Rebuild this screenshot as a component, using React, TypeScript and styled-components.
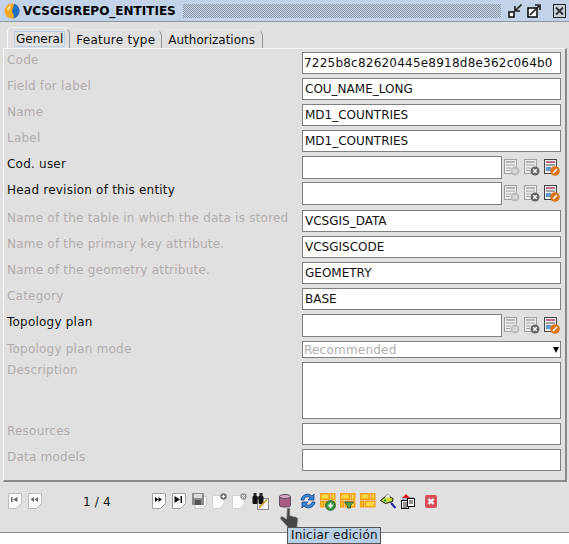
import React from 'react';
import styled, { createGlobalStyle } from 'styled-components';

const GlobalStyle = createGlobalStyle`
  html, body {
    margin: 0;
    padding: 0;
    background: #fff;
  }
  body {
    font-family: "DejaVu Sans", sans-serif;
    font-size: 12px;
  }
`;

const Frame = styled.div`
  position: relative;
  width: 569px;
  height: 544px;
  overflow: hidden;
`;

const Win = styled.div`
  height: 533px;
  background: #e0e0e0;
  border-bottom: 1px solid #8a8a8a;
  box-sizing: border-box;
`;

const TitleBar = styled.div`
  height: 22px;
  background: #c2d2e8;
  border-bottom: 1px solid #8c949e;
  box-sizing: border-box;
  display: flex;
  align-items: center;
  padding: 0 3px 0 4px;
`;

const TitleText = styled.span`
  font-weight: bold;
  font-size: 12px;
  color: #000;
  margin-left: 3px;
`;

const Dots = styled.div`
  flex: 1;
  height: 14px;
  margin: 0 7px 0 7px;
  background-image: conic-gradient(#8e98a6 25%, #c2d2e8 0 50%, #8e98a6 0 75%, #c2d2e8 0);
  background-size: 2px 2px;
`;

const TitleButtons = styled.div`
  display: flex;
  align-items: center;
  gap: 5px;
`;

const CloseSlot = styled.div`
  display: flex;
  margin-left: 12px;
`;

const TabStrip = styled.div`
  display: flex;
  height: 26px;
  padding: 5px 0 0 7px;
  box-sizing: border-box;
`;

const Tab = styled.div<{ $active?: boolean; $ls?: number; $pr?: number }>`
  height: ${p => (p.$active ? 21 : 19)}px;
  margin-top: ${p => (p.$active ? 0 : 2)}px;
  margin-right: 2px;
  padding: ${p => (p.$active ? '3px 4px 0 6px' : `3px ${p.$pr ?? 6}px 0 3px`)};
  box-sizing: border-box;
  border-left: 1px solid ${p => (p.$active ? '#fafafa' : 'transparent')};
  border-top: 1px solid ${p => (p.$active ? '#f0f0f0' : '#e6e6e6')};
  border-right: 1px solid #969696;
  border-radius: 5px 7px 0 0;
  color: #111;
  font-size: 12px;
  line-height: 14px;
  letter-spacing: ${p => p.$ls ?? 0}px;
  white-space: nowrap;
`;

const TabFocus = styled.span`
  display: inline-block;
  border: 1px solid #b8cfe8;
  padding: 0 1px;
  line-height: 14px;
`;

const Sheet = styled.div`
  margin: 0 2px 0 3px;
  height: 434px;
  padding: 3px 4px 0 3px;
  border-top: 1px solid #f6f6f6;
  border-left: 1px solid #f6f6f6;
  border-right: 2px solid #8a8a8a;
  border-bottom: 2px solid #8a8a8a;
  box-sizing: border-box;
  display: flex;
  flex-direction: column;
`;

const Row = styled.div<{ $h?: number; $gap?: number }>`
  display: grid;
  grid-template-columns: 295px 1fr;
  height: ${p => p.$h ?? 22}px;
  margin-bottom: ${p => p.$gap ?? 4}px;
`;

const Label = styled.div<{ $on?: boolean }>`
  color: ${p => (p.$on ? '#111' : '#b2acac')};
  padding-top: 1px;
  line-height: 15px;
  font-size: 12px;
  letter-spacing: 0.22px;
  white-space: nowrap;
`;

const Field = styled.div`
  display: flex;
  align-items: stretch;
  min-width: 0;
`;

const Input = styled.div`
  flex: 1;
  border: 1px solid #808080;
  background: #fff;
  color: #111;
  font-size: 12px;
  line-height: 19px;
  padding: 1px 0 0 2px;
  box-sizing: border-box;
  white-space: nowrap;
  overflow: hidden;
`;

const CodeInput = styled(Input)`
  padding-left: 1px;
  letter-spacing: 0.22px;
`;

const EmptyWithIcons = styled(Input)`
  flex: 0 0 200px;
`;

const FieldIcons = styled.div`
  display: flex;
  align-items: center;
  gap: 4px;
  margin-left: 2px;
`;

const SelectBox = styled(Input)`
  display: flex;
  justify-content: space-between;
  align-items: center;
  color: #b2acac;
  line-height: 14px;
  padding: 0 0 0 1px;
  letter-spacing: 0.22px;
`;

const Caret = styled.span`
  width: 0;
  height: 0;
  border-left: 3.500px solid transparent;
  border-right: 3.500px solid transparent;
  border-top: 6px solid #000;
  margin-right: 1px;
`;

const Toolbar = styled.div`
  display: flex;
  align-items: center;
  height: 24px;
  margin-top: 7px;
  padding-left: 8px;
`;

const Cell = styled.div<{ $w?: number; $pl?: number }>`
  display: flex;
  align-items: center;
  box-sizing: border-box;
  width: ${p => p.$w ?? 20}px;
  padding-left: ${p => p.$pl ?? 0}px;
`;

const Pager = styled.span`
  box-sizing: border-box;
  width: 104px;
  padding: 2px 0 0 35px;
  color: #111;
  font-size: 12px;
  letter-spacing: 0.2px;
`;

const Cursor = styled.svg`
  position: absolute;
  left: 279px;
  top: 507px;
`;

const Tooltip = styled.div`
  position: absolute;
  left: 287px;
  top: 527px;
  height: 17px;
  width: 94px;
  padding-left: 3px;
  box-sizing: border-box;
  background: #b8cfe5;
  border: 1px solid #555;
  font-size: 12px;
  letter-spacing: 0.2px;
  line-height: 15px;
  color: #111;
  white-space: nowrap;
`;

const LogoIcon = () => (
  <svg width="16" height="16" viewBox="0 0 16 16">
    <circle cx="8" cy="8" r="7.500" fill="#f2a81d" />
    <path d="M10 .8c3.500 1 5.500 4 5.500 7.200 0 3.800-3 7-6.500 7.500 1.500-1.500 1-3.500 0-5-1-1.800-1.500-3.500 0-5.500.5-1.500 1.200-3 1-4.200z" fill="#1f6fc4" />
    <path d="M3 5.500c1-2 3-3 4.500-3-1 2-2 4-3.500 5.500z" fill="#fde3a0" />
  </svg>
);

const Minimize = () => (
  <svg width="14" height="14" viewBox="0 0 14 14">
    <rect x="1" y="8" width="5" height="5" fill="#fff" stroke="#111" strokeWidth="1.600" />
    <path d="M13.500 .5 7.500 6.500M7 2v5h5" fill="none" stroke="#222" strokeWidth="1.700" />
  </svg>
);

const Maximize = () => (
  <svg width="14" height="14" viewBox="0 0 14 14">
    <rect x="1" y="4" width="9" height="9" fill="#fff" stroke="#111" strokeWidth="1.600" />
    <path d="M3 11 13 1M8 1h5v5" fill="none" stroke="#222" strokeWidth="1.700" />
  </svg>
);

const CloseBox = () => (
  <svg width="13" height="14" viewBox="0 0 13 14">
    <rect x="0.500" y="0.500" width="12" height="13" fill="#c8d2dc" stroke="#222" />
    <path d="M3 3.500l7 7M10 3.500l-7 7" stroke="#333" strokeWidth="2" />
  </svg>
);

type DocKind = 'add' | 'del' | 'edit';

const DocIcon = ({ kind }: { kind: DocKind }) => {
  const on = kind === 'edit';
  const line = on ? '#555' : '#a4a4a4';
  return (
    <svg width="16" height="17" viewBox="0 0 16 17">
      <rect x="0.500" y="0.500" width="12" height="14" fill="#ececec" stroke={on ? '#444' : '#a0a0a0'} />
      <path d="M2 3h9" stroke={on ? '#b8406a' : line} strokeWidth="1.500" />
      <path d="M2 6h9" stroke={line} />
      <path d="M2 9h5M2 11.500h4" stroke={line} />
      {on && <rect x="2" y="8" width="5" height="4" fill="#5b9ad0" />}
      {kind === 'add' && (
        <>
          <circle cx="11" cy="12" r="4.500" fill="#bcbcbc" />
          <path d="M8.500 11h5M13.500 13h-5" stroke="#f4f4f4" />
        </>
      )}
      {kind === 'del' && (
        <>
          <circle cx="11" cy="12" r="4.500" fill="#666" />
          <path d="M9.300 10.300l3.400 3.400M12.700 10.300l-3.400 3.400" stroke="#fff" strokeWidth="1.400" />
        </>
      )}
      {on && (
        <>
          <circle cx="11" cy="12" r="4.800" fill="#dc7418" />
          <path d="M9 14 13 10" stroke="#fff" strokeWidth="1.600" />
        </>
      )}
    </svg>
  );
};

const FieldActions = () => (
  <FieldIcons>
    <DocIcon kind="add" />
    <DocIcon kind="del" />
    <DocIcon kind="edit" />
  </FieldIcons>
);

const NavIcon = ({ d, dark }: { d: string; dark?: boolean }) => (
  <svg width="14" height="16" viewBox="0 0 14 16">
    <path d="M.5.5h13v10l-5 5h-8z" fill="#fbfbfb" stroke={dark ? '#a0a0a0' : '#bcbcbc'} />
    <path d={d} fill={dark ? '#111' : '#666'} />
  </svg>
);

const SaveIcon = () => (
  <svg width="15" height="16" viewBox="0 0 15 16">
    <path d="M3 3.500h11.500v8l-4 4H3z" fill="#f4f4f4" stroke="#c8c8c8" />
    <rect x="0" y="0" width="12" height="12" fill="#8c8c8c" />
    <rect x="2" y="1" width="8" height="4" fill="#dcdcdc" />
    <rect x="3" y="7" width="6" height="5" fill="#555" />
  </svg>
);

const NewPageIcon = ({ del }: { del?: boolean }) => (
  <svg width="15" height="16" viewBox="0 0 15 16">
    <path d="M.5 2.500h11.500v8l-4 5H.5z" fill="#fbfbfb" stroke="#d4d4d4" />
    <circle cx="11.500" cy="3.500" r="3.200" fill={del ? '#999' : '#777'} />
    <path d={del ? 'M10 2l3 3M13 2l-3 3' : 'M10 3.500h3M11.500 2v3'} stroke="#fff" />
  </svg>
);

const SearchDoc = () => (
  <svg width="18" height="17" viewBox="0 0 18 17">
    <rect x="5.500" y="5.500" width="11" height="11" fill="#f4f4f4" stroke="#8a8a8a" />
    <path d="M7 9h4M7 12h2" stroke="#8a8fa8" />
    <rect x="1.500" y="0" width="3" height="4" fill="#222" />
    <rect x="7.500" y="0" width="3" height="4" fill="#222" />
    <rect x="0.500" y="3" width="5" height="8" rx="1" fill="#111" />
    <rect x="6.500" y="3" width="5" height="8" rx="1" fill="#111" />
    <rect x="5" y="3.500" width="2" height="3" fill="#333" />
    <path d="M7 15 15 6.500" stroke="#c29a30" strokeWidth="1.600" />
  </svg>
);

const DbIcon = () => (
  <svg width="12" height="14" viewBox="0 0 12 14">
    <path d="M.5 2.500v9c0 2 11 2 11 0v-9z" fill="#aa5c80" stroke="#5c4a68" />
    <ellipse cx="6" cy="2.500" rx="5.500" ry="2" fill="#d8a8c0" stroke="#5c4a68" />
  </svg>
);

const RefreshIcon = () => (
  <svg width="16" height="16" viewBox="0 0 16 16">
    <path d="M1 7C1.500 2 8-1 12 3l2-2v6H8l2.200-2.200C7.500 2.800 4.500 4.200 4 7z" fill="#3a86d0" stroke="#12408a" strokeWidth="0.800" />
    <path d="M15 9c-.5 5-7 8-11 4l-2 2V9h6l-2.200 2.200c2.700 2 5.700.6 6.200-2.200z" fill="#3a86d0" stroke="#12408a" strokeWidth="0.800" />
  </svg>
);

const TableIcon = ({ badge }: { badge?: 'add' | 'filter' }) => (
  <svg width="16" height="20" viewBox="0 -2 16 20">
    <rect x="0.750" y="0.750" width="8.500" height="5.500" fill="#ffd84a" stroke="#f0a010" strokeWidth="1.500" />
    <rect x="11.250" y="0.750" width="3.500" height="5.500" fill="#ffd84a" stroke="#f0a010" strokeWidth="1.500" />
    <rect x="0.750" y="8.250" width="2.500" height="5.500" fill="#ffd84a" stroke="#f0a010" strokeWidth="1.500" />
    <rect x="5.250" y="8.250" width="9.500" height="5.500" fill="#ffd84a" stroke="#f0a010" strokeWidth="1.500" />
    {badge === 'add' && (
      <>
        <circle cx="10.500" cy="12.500" r="4.800" fill="#3e9a4a" stroke="#1f5a2a" />
        <path d="M8 12.500h5M10.500 10v5" stroke="#fff" strokeWidth="1.500" />
      </>
    )}
    {badge === 'filter' && <path d="M4.500 9h9l-3 4v2H7.500v-2z" fill="#5a9a48" stroke="#2a5a28" strokeWidth="0.800" />}
  </svg>
);

const LensIcon = () => (
  <svg width="17" height="17" viewBox="0 0 17 17">
    <path d="M.5 7.500 5 4c1-2.500 4-2.500 5 0l3 1.500-.5 3-7 2z" fill="#c8e040" stroke="#111" />
    <path d="M6 2.500c1-1 3-1 4 1.500L5 5z" fill="#f4f4f4" />
    <circle cx="5" cy="7.500" r="1.200" fill="#2a9a4a" />
    <circle cx="9" cy="6.500" r="1.200" fill="#e8d820" />
    <path d="M11 10l4.500 5" stroke="#1a2aa0" strokeWidth="2" />
  </svg>
);

const ReportIcon = () => (
  <svg width="16" height="17" viewBox="0 0 16 17">
    <rect x="2" y="4" width="12" height="5" fill="#a8b0cc" />
    <path d="M2 5l4-4 4 4z" fill="#d81c1c" />
    <rect x="1.500" y="7.500" width="7" height="8" fill="#fff" stroke="#111" />
    <rect x="7.500" y="5.500" width="7" height="8" fill="#fff" stroke="#111" />
    <path d="M3 10h4M3 12h4M3 14h4M9 8h4M9 10h4" stroke="#222" />
  </svg>
);

const DeleteIcon = () => (
  <svg width="12" height="13" viewBox="0 0 12 13">
    <rect width="12" height="13" rx="2" fill="#d8505c" />
    <path d="M3.500 4l5 5M8.500 4l-5 5" stroke="#fff" strokeWidth="2.200" />
  </svg>
);

const HandCursor = () => (
  <Cursor width="20" height="21" viewBox="0 0 20 21">
    <path
      d="M8 1.500c1-1 3-1 3 1v6l6 1.500c2 .5 2 2 2 3.500l-1 7H9L1.500 12c-1-2 1-3 3-2l3 2z"
      fill="#464646"
      stroke="#bdbdbd"
      strokeWidth="0.800"
    />
  </Cursor>
);

const fields: { label: string; value?: string; on?: boolean; icons?: boolean; h?: number; gap?: number }[] = [
  { label: 'Field for label', value: 'COU_NAME_LONG' },
  { label: 'Name', value: 'MD1_COUNTRIES' },
  { label: 'Label', value: 'MD1_COUNTRIES' },
  { label: 'Cod. user', on: true, icons: true, h: 23, gap: 3 },
  { label: 'Head revision of this entity', on: true, icons: true, h: 23, gap: 5 },
  { label: 'Name of the table in which the data is stored', value: 'VCSGIS_DATA' },
  { label: 'Name of the primary key attribute.', value: 'VCSGISCODE' },
  { label: 'Name of the geometry attribute.', value: 'GEOMETRY' },
  { label: 'Category', value: 'BASE' },
  { label: 'Topology plan', on: true, icons: true, h: 23, gap: 4 }
];

export default function App() {
  return (
    <Frame>
      <GlobalStyle />
      <Win>
        <TitleBar>
          <LogoIcon />
          <TitleText>VCSGISREPO_ENTITIES</TitleText>
          <Dots />
          <TitleButtons>
            <Minimize />
            <Maximize />
          </TitleButtons>
          <CloseSlot>
            <CloseBox />
          </CloseSlot>
        </TitleBar>
        <TabStrip>
          <Tab $active>
            <TabFocus>General</TabFocus>
          </Tab>
          <Tab $ls={0.25}>Feature type</Tab>
          <Tab $pr={7}>Authorizations</Tab>
        </TabStrip>
        <Sheet>
          <Row>
            <Label>Code</Label>
            <Field>
              <CodeInput>7225b8c82620445e8918d8e362c064b0</CodeInput>
            </Field>
          </Row>
          {fields.map(f => (
            <Row key={f.label} $h={f.h} $gap={f.gap}>
              <Label $on={f.on}>{f.label}</Label>
              <Field>
                {f.icons ? <EmptyWithIcons /> : <Input>{f.value}</Input>}
                {f.icons && <FieldActions />}
              </Field>
            </Row>
          ))}
          <Row $h={17}>
            <Label>Topology plan mode</Label>
            <Field>
              <SelectBox>
                Recommended
                <Caret />
              </SelectBox>
            </Field>
          </Row>
          <Row $h={57}>
            <Label>Description</Label>
            <Field>
              <Input />
            </Field>
          </Row>
          <Row>
            <Label>Resources</Label>
            <Field>
              <Input />
            </Field>
          </Row>
          <Row>
            <Label>Data models</Label>
            <Field>
              <Input />
            </Field>
          </Row>
        </Sheet>
        <Toolbar>
          <Cell>
            <NavIcon d="M3 4h1.500v5H3zM5 6.500 9.500 4v5z" />
          </Cell>
          <Cell>
            <NavIcon d="M2.500 6.500 6 4v5zM6.500 6.500 10 4v5z" />
          </Cell>
          <Pager>1 / 4</Pager>
          <Cell>
            <NavIcon dark d="M3 4l3.500 2.500L3 9zM6.500 4 10 6.500 6.500 9z" />
          </Cell>
          <Cell>
            <NavIcon dark d="M2.500 3l5.500 3.500L2.500 10zM8.500 3H10v7H8.500z" />
          </Cell>
          <Cell>
            <SaveIcon />
          </Cell>
          <Cell>
            <NewPageIcon />
          </Cell>
          <Cell>
            <NewPageIcon del />
          </Cell>
          <Cell>
            <SearchDoc />
          </Cell>
          <Cell $w={28} $pl={7}>
            <DbIcon />
          </Cell>
          <Cell>
            <RefreshIcon />
          </Cell>
          <Cell>
            <TableIcon badge="add" />
          </Cell>
          <Cell>
            <TableIcon badge="filter" />
          </Cell>
          <Cell>
            <TableIcon />
          </Cell>
          <Cell>
            <LensIcon />
          </Cell>
          <Cell>
            <ReportIcon />
          </Cell>
          <Cell $pl={5}>
            <DeleteIcon />
          </Cell>
        </Toolbar>
      </Win>
      <HandCursor />
      <Tooltip>Iniciar edición</Tooltip>
    </Frame>
  );
}
